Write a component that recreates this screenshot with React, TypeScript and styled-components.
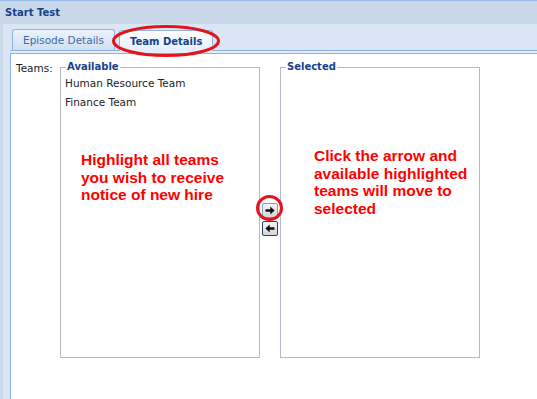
import React from 'react'
import styled, { createGlobalStyle } from 'styled-components'

const availableTeams = ['Human Resource Team', 'Finance Team']

const ArrowIcon = ({ dir }: { dir: 'right' | 'left' }) => (
  <svg width="10" height="9" viewBox="0 0 10 9">
    {dir === 'right'
      ? <path d="M0.5 3.3h4.8V0.5L9.6 4.5 5.3 8.5V5.7H0.5z" fill="#111" />
      : <path d="M9.5 3.3H4.7V0.5L0.4 4.5 4.7 8.5V5.7H9.5z" fill="#111" />}
  </svg>
)

const App = () => {
  return (
    <>
      <GlobalStyle />
      <Window>
        <Header>Start Test</Header>
        <Frame>
          <TabStrip>
            <Tab>Episode Details</Tab>
            <Tab active>Team Details</Tab>
          </TabStrip>
          <StripSpacer />
          <TabBody>
            <Row>
              <FieldLabel>Teams:</FieldLabel>
              <ListSet>
                <legend>Available</legend>
                <ItemList>
                  {availableTeams.map(team => (
                    <ListItem key={team}>{team}</ListItem>
                  ))}
                </ItemList>
              </ListSet>
              <MoveButtons>
                <MoveButton>
                  <ArrowIcon dir="right" />
                </MoveButton>
                <MoveButton dark>
                  <ArrowIcon dir="left" />
                </MoveButton>
              </MoveButtons>
              <ListSet>
                <legend>Selected</legend>
              </ListSet>
            </Row>
          </TabBody>
        </Frame>

        {/* annotations drawn over the screenshot */}
        <Note style={{ left: 81, top: 151 }}>
          Highlight all teams<br />
          you wish to receive<br />
          notice of new hire
        </Note>
        <Note style={{ left: 314, top: 147 }}>
          Click the arrow and<br />
          available highlighted<br />
          teams will move to<br />
          selected
        </Note>
        <Ring style={{ left: 111, top: 24 }} width="110" height="34" viewBox="0 0 110 34">
          <ellipse cx="55" cy="17" rx="52.5" ry="14.5" />
        </Ring>
        <Ring style={{ left: 255, top: 194 }} width="29" height="28" viewBox="0 0 29 28">
          <ellipse cx="14.5" cy="14" rx="12" ry="11.5" />
        </Ring>
      </Window>
    </>
  )
}

export default App

const GlobalStyle = createGlobalStyle`
  html, body {
    margin: 0;
    padding: 0;
    background: #fff;
  }
  body {
    font-family: "DejaVu Sans", Verdana, sans-serif;
  }
`

const Window = styled.div`
  position: relative;
  width: 537px;
  height: 399px;
  overflow: hidden;
  display: flex;
  flex-direction: column;
  background: #dae6f4;
`

const Header = styled.div`
  height: 23px;
  border-top: 1px solid #99bbe8;
  background: #c8d8e8;
  color: #15428b;
  font-weight: bold;
  font-size: 10px;
  line-height: 24px;
  padding-left: 5px;
`

const Frame = styled.div`
  flex: 1;
  display: flex;
  flex-direction: column;
  margin-left: 10px;
  position: relative;
  &::before {
    content: '';
    position: absolute;
    left: -10px;
    top: 0;
    bottom: 0;
    width: 3px;
    background: #cbd9e9;
  }
`

const TabStrip = styled.div`
  height: 26px;
  display: flex;
  align-items: flex-end;
  gap: 4px;
  padding-left: 2px;
  border-bottom: 1px solid #8db2e3;
`

const Tab = styled.div<{ active?: boolean }>`
  height: 20px;
  padding: 0 10px;
  margin-bottom: ${p => (p.active ? '-1px' : '0')};
  border: 1px solid #8db2e3;
  border-bottom: 0;
  border-radius: 3px 3px 0 0;
  background: ${p => (p.active
    ? 'linear-gradient(#ffffff, #e3eefb)'
    : 'linear-gradient(#edf3fb, #cfdff3)')};
  color: ${p => (p.active ? '#15428b' : '#416aa3')};
  font-weight: ${p => (p.active ? 'bold' : 'normal')};
  font-size: ${p => (p.active ? '10px' : '10.5px')};
  line-height: ${p => (p.active ? '21px' : '20px')};
  white-space: nowrap;
`

const StripSpacer = styled.div`
  height: 2px;
  background: #e3eefb;
  border-bottom: 1px solid #8db2e3;
`

const TabBody = styled.div`
  flex: 1;
  background: #fff;
  border-left: 1px solid #8db2e3;
  padding: 7px 0 0 5px;
`

const Row = styled.div`
  display: flex;
  align-items: flex-start;
`

const FieldLabel = styled.div`
  width: 44px;
  padding-top: 1px;
  font-size: 10.5px;
  color: #222;
`

const ListSet = styled.fieldset`
  box-sizing: border-box;
  width: 200px;
  height: 297px;
  margin: 0;
  padding: 0 4px;
  border: 1px solid #b5b8c8;
  & > legend {
    margin-left: 1px;
    padding: 0 1px;
    font-size: 10px;
    font-weight: bold;
    line-height: 12px;
    color: #15428b;
  }
`

const ItemList = styled.div`
  padding-top: 1px;
`

const ListItem = styled.div`
  font-size: 10.5px;
  line-height: 19px;
  color: #222;
`

const MoveButtons = styled.div`
  width: 20px;
  align-self: stretch;
  display: flex;
  flex-direction: column;
  align-items: center;
  justify-content: center;
  gap: 3px;
  padding-top: 20px;
`

const MoveButton = styled.div<{ dark?: boolean }>`
  box-sizing: border-box;
  width: 16px;
  height: 15px;
  display: flex;
  align-items: center;
  justify-content: center;
  border: 1px solid ${p => (p.dark ? '#26416e' : '#8d9fb9')};
  border-radius: 2px;
  background: linear-gradient(#f6f6f6, #d6d6d6);
`

const Note = styled.div`
  position: absolute;
  font-family: "Liberation Sans", Arial, sans-serif;
  font-weight: bold;
  font-size: 15.5px;
  line-height: 17.5px;
  color: #ff0000;
  white-space: nowrap;
`

const Ring = styled.svg`
  position: absolute;
  overflow: visible;
  & ellipse {
    fill: none;
    stroke: #e5141c;
    stroke-width: 3;
  }
`
